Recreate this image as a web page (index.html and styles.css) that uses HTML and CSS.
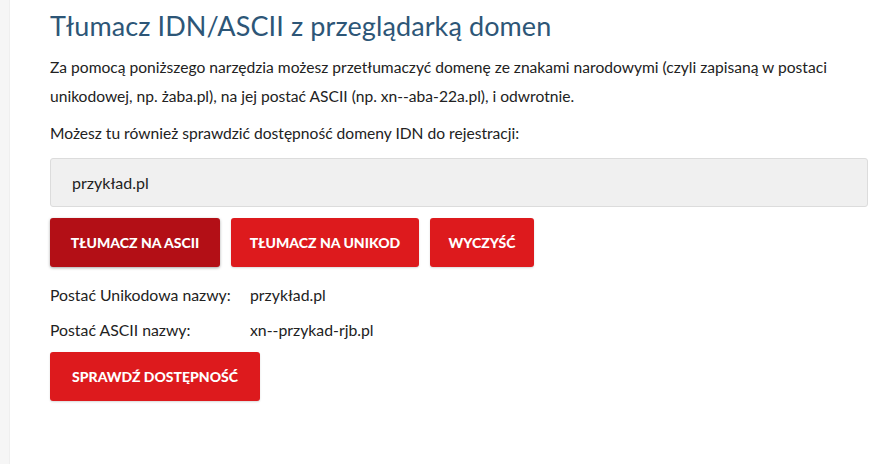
FILE: index.html
```html
<!DOCTYPE html>
<html lang="pl">
<head>
<meta charset="utf-8">
<title>Tłumacz IDN/ASCII</title>
<link rel="stylesheet" href="styles.css">
</head>
<body>
<div class="page">
  <div class="side"></div>
  <main class="content">
    <h1 class="title">Tłumacz IDN/ASCII z przeglądarką domen</h1>
    <p class="intro">Za pomocą poniższego narzędzia możesz przetłumaczyć domenę ze znakami narodowymi (czyli zapisaną w postaci unikodowej, np. żaba.pl), na jej postać ASCII (np. xn--aba-22a.pl), i odwrotnie.</p>
    <p class="intro second">Możesz tu również sprawdzić dostępność domeny IDN do rejestracji:</p>
    <div class="field">przykład.pl</div>
    <div class="buttons">
      <button class="btn btn-active">TŁUMACZ NA ASCII</button>
      <button class="btn">TŁUMACZ NA UNIKOD</button>
      <button class="btn">WYCZYŚĆ</button>
    </div>
    <div class="results">
      <div class="label">Postać Unikodowa nazwy:</div><div class="value">przykład.pl</div>
      <div class="label">Postać ASCII nazwy:</div><div class="value">xn--przykad-rjb.pl</div>
    </div>
    <button class="btn btn-check">SPRAWDŹ DOSTĘPNOŚĆ</button>
  </main>
</div>
</body>
</html>
```

FILE: styles.css
```css
html, body {
  margin: 0;
  padding: 0;
  background: #ffffff;
}
.page {
  display: flex;
  min-height: 464px;
}
.side {
  width: 9px;
  flex: none;
  background: #f6f6f6;
  border-right: 1px solid #efefef;
}
.content {
  flex: 1;
  padding: 8px 16px 0 40px;
  font-family: Lato, "Liberation Sans", sans-serif;
  color: #222222;
}
.title {
  margin: 0;
  font-family: Lato, "Noto Sans", sans-serif;
  font-weight: 400;
  font-size: 27px;
  line-height: 36px;
  letter-spacing: 0.1px;
  color: #2d5677;
}
.intro {
  margin: 9px 0 0;
  font-size: 15.6px;
  line-height: 29px;
}
.intro.second {
  margin-top: 8px;
}
.field {
  margin-top: 10px;
  box-sizing: border-box;
  height: 49px;
  border: 1px solid #dcdcdc;
  border-radius: 3px;
  background: #f0f0f0;
  padding: 0 21px;
  display: flex;
  align-items: center;
  font-size: 16px;
  color: #222;
}
.buttons {
  display: flex;
  gap: 11px;
  margin-top: 11px;
}
.btn {
  height: 49px;
  border: none;
  border-radius: 3px;
  background: #dd1a1d;
  color: #ffffff;
  font-family: Lato, "Liberation Sans", sans-serif;
  font-weight: 900;
  font-size: 14px;
  padding: 0 16px;
  box-shadow: 0 1px 2px rgba(0,0,0,0.15);
}
.btn:nth-child(1) { width: 170px; }
.btn:nth-child(2) { width: 188px; }
.btn:nth-child(3) { width: 104px; }
.btn-active {
  background: #b30f16;
  box-shadow: 0 1px 3px rgba(0,0,0,0.35);
}
.results {
  display: grid;
  grid-template-columns: 200px auto;
  row-gap: 6px;
  margin-top: 13px;
  font-size: 15.8px;
  line-height: 29px;
}
.btn-check {
  margin-top: 8px;
  width: 210px;
}
```
